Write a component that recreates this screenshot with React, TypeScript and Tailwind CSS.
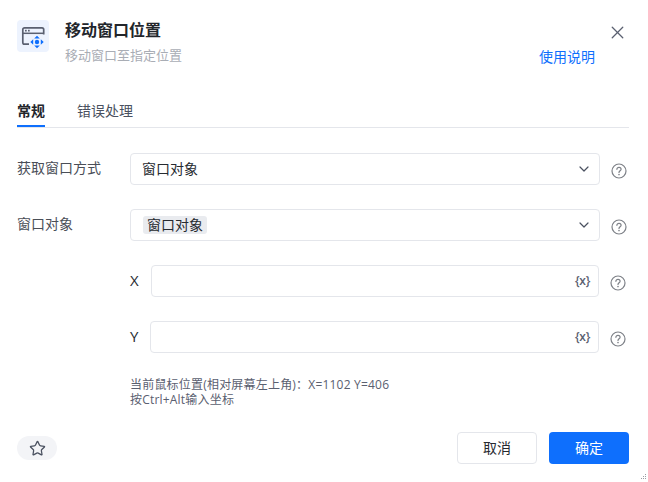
import { ChevronDown, X, Star } from "lucide-react";

const font = { fontFamily: '"Open Sans", "Noto Sans CJK SC", sans-serif' };

const HelpIcon = () => (
  <svg width="16" height="16" viewBox="0 0 16 16" fill="none" className="shrink-0">
    <circle cx="8" cy="8" r="7" stroke="#7d8087" strokeWidth="1.2" />
    <path d="M5.9 6.3c0-1.2.9-2 2.1-2s2.1.8 2.1 1.9c0 1.6-2.1 1.6-2.1 3.3" stroke="#7d8087" strokeWidth="1.2" strokeLinecap="round" />
    <circle cx="8" cy="11.6" r=".8" fill="#7d8087" />
  </svg>
);

const WindowIcon = () => (
  <div className="w-8 h-8 rounded-[4px] bg-[#edf3fe] shrink-0">
    <svg width="32" height="32" viewBox="0 0 32 32" fill="none">
      <path d="M12 24.200H7.500A1.700 1.700 0 0 1 5.800 22.500V9.500A1.700 1.700 0 0 1 7.500 7.800h17.500A1.700 1.700 0 0 1 26.700 9.500V14.500" stroke="#5a6070" strokeWidth="1.700" />
      <path d="M6 13.300h20.500" stroke="#5a6070" strokeWidth="1.500" />
      <rect x="8" y="9.800" width="1.700" height="1.700" fill="#5a6070" />
      <rect x="11" y="9.800" width="1.700" height="1.700" fill="#5a6070" />
      <path d="M20 15.700l2.800 2.900h-5.600zM20 28.300l-2.800-2.900h5.600zM13.300 22l2.900-2.800v5.600zM26.700 22l-2.900-2.800v5.600z" fill="#0e6ffd" />
      <circle cx="20" cy="22" r="2.200" fill="#0e6ffd" />
    </svg>
  </div>
);

const VarIcon = () => (
  <span className="text-xs font-semibold text-[#5a6070] leading-none tracking-[-0.3px]">{"{x}"}</span>
);

const SelectRow = ({ label, children }: { label: string; children: React.ReactNode }) => (
  <div className="flex items-center h-8">
    <div className="w-[113px] text-sm text-[#4a4e57] mb-[2px]">{label}</div>
    <div className="w-[470px] h-8 border border-[#e4e6eb] rounded-[4px] flex items-center justify-between pl-[11px] pr-[7px]">
      <div className="text-sm text-[#262a30]">{children}</div>
      <ChevronDown size={16} color="#4a5160" strokeWidth={1.800} />
    </div>
    <div className="ml-[11px] mt-[3px]">
      <HelpIcon />
    </div>
  </div>
);

const CoordRow = ({ label, labelClass, inputClass }: { label: string; labelClass: string; inputClass: string }) => (
  <div className="flex items-center h-8 pl-[113px]">
    <span className={`text-[15px] text-[#262a30] mb-[2px] ${labelClass}`}>{label}</span>
    <div className={`h-8 border border-[#e4e6eb] rounded-[4px] flex items-center justify-end pr-2 ${inputClass}`}>
      <VarIcon />
    </div>
    <div className="ml-[11px] mt-[3px]">
      <HelpIcon />
    </div>
  </div>
);

export default function App() {
  return (
    <div style={font} className="relative w-[648px] h-[482px] bg-white overflow-hidden flex flex-col pl-[17px] pr-[19px]">
      <div className="flex pt-5 h-[100px] shrink-0">
        <WindowIcon />
        <div className="ml-4 flex-1">
          <div className="text-base font-bold text-[#23262b] leading-5">移动窗口位置</div>
          <div className="text-[13px] text-[#a9adb5] leading-5 mt-[5px]">移动窗口至指定位置</div>
        </div>
        <div className="flex flex-col items-end">
          <button className="mt-[2px] mr-[1px] text-[#5a6070]">
            <X size={21} strokeWidth={1.500} />
          </button>
          <a className="text-sm text-[#0e6ffd] leading-5 mt-[4px] mr-[34px]">使用说明</a>
        </div>
      </div>

      <div className="flex border-b border-[#e4e6eb] h-[28px] shrink-0">
        <div className="text-sm font-bold text-[#23262b] border-b-2 border-[#0e6ffd] h-[27px] leading-5 pt-px w-7">常规</div>
        <div className="text-sm text-[#4a5160] ml-8 leading-5 pt-px">错误处理</div>
      </div>

      <div className="flex flex-col gap-6 mt-[25px]">
        <SelectRow label="获取窗口方式">窗口对象</SelectRow>
        <SelectRow label="窗口对象">
          <span className="block ml-px h-[18px] leading-[18px] bg-[#e9ebef] rounded-[3px] px-1">窗口对象</span>
        </SelectRow>
        <CoordRow label="X" labelClass="w-[21px]" inputClass="w-[448px]" />
        <CoordRow label="Y" labelClass="w-5" inputClass="w-[449px]" />
      </div>

      <div className="ml-[113px] mt-[24px] text-xs leading-[15px] tracking-[0.2px] text-[#5a6070]">
        <div>当前鼠标位置(相对屏幕左上角)：X=1102 Y=406</div>
        <div>按Ctrl+Alt输入坐标</div>
      </div>

      <div className="flex items-center justify-between mt-[25px]">
        <button className="w-10 h-6 rounded-full bg-[#f3f4f7] flex items-center justify-center">
          <Star size={17} color="#4a5160" strokeWidth={1.800} />
        </button>
        <div className="flex gap-3">
          <button className="w-20 h-8 rounded-[4px] border border-[#e4e6eb] text-sm text-[#262a30]">取消</button>
          <button className="w-20 h-8 rounded-[4px] bg-[#0e6ffd] text-sm text-white">确定</button>
        </div>
      </div>

      <svg width="8" height="8" viewBox="0 0 8 8" className="absolute right-[1px] bottom-[1px]">
        <rect x="6" y="1" width="1" height="1" fill="#9a9da3" />
        <rect x="4" y="3" width="1" height="1" fill="#9a9da3" />
        <rect x="6" y="3" width="1" height="1" fill="#9a9da3" />
        <rect x="2" y="5" width="1" height="1" fill="#9a9da3" />
        <rect x="4" y="5" width="1" height="1" fill="#9a9da3" />
        <rect x="6" y="5" width="1" height="1" fill="#9a9da3" />
      </svg>
    </div>
  );
}
